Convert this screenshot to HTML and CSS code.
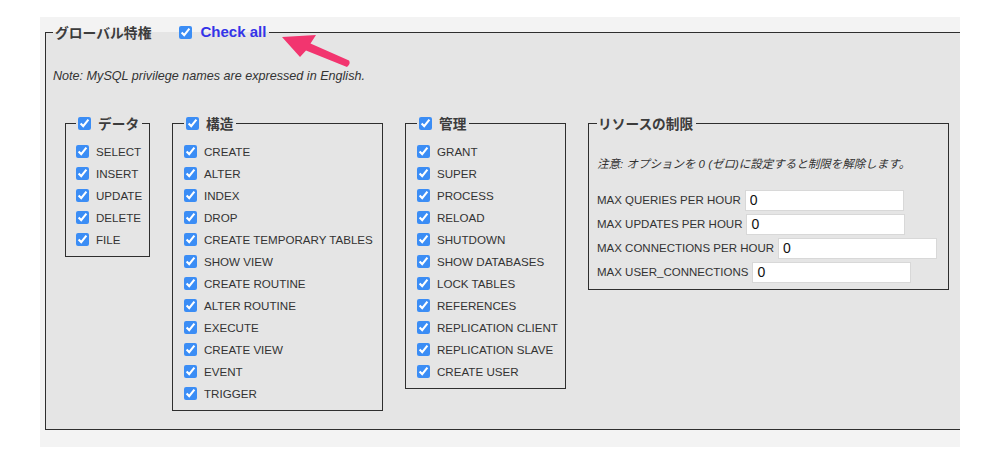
FILE: index.html
```html
<!DOCTYPE html>
<html lang="ja">
<head>
<meta charset="utf-8">
<title>グローバル特権</title>
<link rel="stylesheet" href="styles.css">
</head>
<body>
<div class="frame">
  <fieldset class="global">
    <legend class="global-legend">
      <span class="global-title">グローバル特権</span>
      <input type="checkbox" class="cb cb-all" checked>
      <a class="check-all" href="#">Check all</a>
    </legend>
    <p class="note">Note: MySQL privilege names are expressed in English.</p>
    <div class="groups">
      <fieldset class="grp grp-data">
        <legend class="grp-legend"><input type="checkbox" class="cb" checked><span>データ</span></legend>
        <label class="item"><input type="checkbox" class="cb" checked>SELECT</label>
        <label class="item"><input type="checkbox" class="cb" checked>INSERT</label>
        <label class="item"><input type="checkbox" class="cb" checked>UPDATE</label>
        <label class="item"><input type="checkbox" class="cb" checked>DELETE</label>
        <label class="item"><input type="checkbox" class="cb" checked>FILE</label>
      </fieldset>
      <fieldset class="grp grp-struct">
        <legend class="grp-legend"><input type="checkbox" class="cb" checked><span>構造</span></legend>
        <label class="item"><input type="checkbox" class="cb" checked>CREATE</label>
        <label class="item"><input type="checkbox" class="cb" checked>ALTER</label>
        <label class="item"><input type="checkbox" class="cb" checked>INDEX</label>
        <label class="item"><input type="checkbox" class="cb" checked>DROP</label>
        <label class="item"><input type="checkbox" class="cb" checked>CREATE TEMPORARY TABLES</label>
        <label class="item"><input type="checkbox" class="cb" checked>SHOW VIEW</label>
        <label class="item"><input type="checkbox" class="cb" checked>CREATE ROUTINE</label>
        <label class="item"><input type="checkbox" class="cb" checked>ALTER ROUTINE</label>
        <label class="item"><input type="checkbox" class="cb" checked>EXECUTE</label>
        <label class="item"><input type="checkbox" class="cb" checked>CREATE VIEW</label>
        <label class="item"><input type="checkbox" class="cb" checked>EVENT</label>
        <label class="item"><input type="checkbox" class="cb" checked>TRIGGER</label>
      </fieldset>
      <fieldset class="grp grp-admin">
        <legend class="grp-legend"><input type="checkbox" class="cb" checked><span>管理</span></legend>
        <label class="item"><input type="checkbox" class="cb" checked>GRANT</label>
        <label class="item"><input type="checkbox" class="cb" checked>SUPER</label>
        <label class="item"><input type="checkbox" class="cb" checked>PROCESS</label>
        <label class="item"><input type="checkbox" class="cb" checked>RELOAD</label>
        <label class="item"><input type="checkbox" class="cb" checked>SHUTDOWN</label>
        <label class="item"><input type="checkbox" class="cb" checked>SHOW DATABASES</label>
        <label class="item"><input type="checkbox" class="cb" checked>LOCK TABLES</label>
        <label class="item"><input type="checkbox" class="cb" checked>REFERENCES</label>
        <label class="item"><input type="checkbox" class="cb" checked>REPLICATION CLIENT</label>
        <label class="item"><input type="checkbox" class="cb" checked>REPLICATION SLAVE</label>
        <label class="item"><input type="checkbox" class="cb" checked>CREATE USER</label>
      </fieldset>
      <fieldset class="grp grp-res">
        <legend class="grp-legend res-legend"><span>リソースの制限</span></legend>
        <p class="res-note">注意: オプションを 0 (ゼロ)に設定すると制限を解除します。</p>
        <label class="lim">MAX QUERIES PER HOUR<input type="text" class="lim-input" value="0"></label>
        <label class="lim">MAX UPDATES PER HOUR<input type="text" class="lim-input" value="0"></label>
        <label class="lim">MAX CONNECTIONS PER HOUR<input type="text" class="lim-input" value="0"></label>
        <label class="lim">MAX USER_CONNECTIONS<input type="text" class="lim-input" value="0"></label>
      </fieldset>
    </div>
  </fieldset>
  <svg class="arrow" width="74" height="40" viewBox="0 0 74 40" aria-hidden="true">
    <path d="M2 4 L36 2 L30.5 10.5 L69 27.5 Q71 30.5 67 34 L26 17.5 L20 24 Z" fill="#f2356f"/>
  </svg>
</div>
</body>
</html>
```

FILE: styles.css
```css
* {
  box-sizing: border-box;
}

body {
  margin: 0;
  background: #ffffff;
  font-family: "Liberation Sans", Arial, "Noto Sans CJK JP", sans-serif;
  color: #333333;
}

.frame {
  position: relative;
  margin: 17px 0 0 40px;
  width: 920px;
  height: 430px;
  padding-top: 5px;
  background: #f3f3f3;
  overflow: hidden;
}

.global {
  margin: 0 0 0 5px;
  width: 940px;
  border: 1px solid #2e2e2e;
  background: #e5e5e5;
  padding: 0 0 18px 7px;
}

.global-legend {
  display: flex;
  align-items: center;
  height: 20px;
  padding: 0 3px 0 2px;
}

.global-title {
  font-family: "Noto Sans CJK JP", sans-serif;
  font-weight: 700;
  font-size: 13.8px;
  line-height: 20px;
  color: #3c3c3c;
}

.cb {
  width: 13px;
  height: 13px;
  margin: 0;
  flex: none;
  accent-color: #3b8df5;
}

.cb-all {
  margin-left: 28px;
}

.check-all {
  margin-left: 8px;
  font-weight: 700;
  font-size: 15px;
  line-height: 20px;
  color: #3434e8;
  text-decoration: none;
}

.note {
  margin: 27px 0 30px;
  font-style: italic;
  font-size: 12.6px;
  line-height: 14px;
}

.groups {
  display: flex;
  align-items: flex-start;
  gap: 22px;
  margin-left: 12px;
}

.grp {
  margin: 0;
  border: 1px solid #2e2e2e;
  padding: 7px 6px 6px 11px;
}

.grp-data {
  width: 85px;
  padding-left: 10px;
}

.grp-struct {
  width: 211px;
}

.grp-admin {
  width: 161px;
}

.grp-res {
  width: 361px;
  padding-left: 8px;
  padding-bottom: 5px;
}

.grp-legend {
  display: flex;
  align-items: center;
  gap: 7px;
  height: 20px;
  padding: 0 3px 0 2px;
  font-family: "Noto Sans CJK JP", sans-serif;
  font-weight: 700;
  font-size: 13.7px;
  line-height: 20px;
  color: #3c3c3c;
}

.res-legend {
  padding-left: 1px;
}

.item {
  display: flex;
  align-items: center;
  gap: 7px;
  height: 22px;
  font-size: 11.6px;
  color: #333333;
  white-space: nowrap;
}

.res-note {
  margin: 17px 0 17px;
  font-style: italic;
  font-size: 11.5px;
  line-height: 14px;
  white-space: nowrap;
}

.lim {
  display: flex;
  align-items: center;
  gap: 4px;
  height: 24px;
  font-size: 11.5px;
  white-space: nowrap;
}

.lim-input {
  width: 159px;
  height: 21px;
  margin: 0;
  padding: 0 4px;
  border: 1px solid #d8d8d8;
  background: #ffffff;
  font-family: "Liberation Sans", Arial, sans-serif;
  font-size: 14px;
  color: #111111;
  outline: none;
}

.arrow {
  position: absolute;
  left: 240px;
  top: 16px;
}
```
